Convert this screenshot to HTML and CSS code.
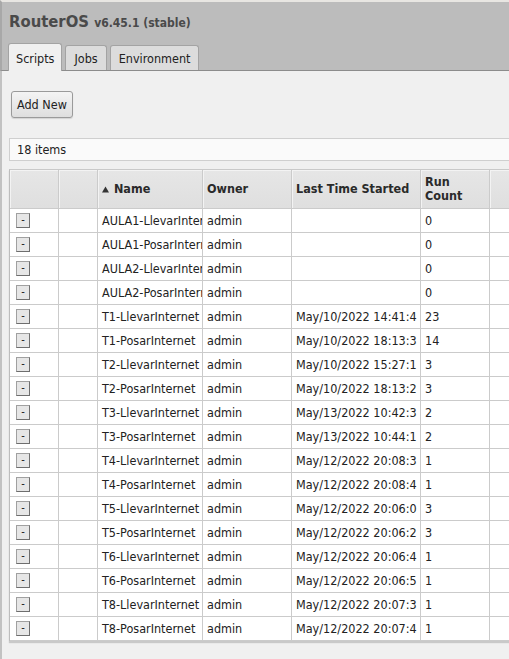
FILE: index.html
```html
<!DOCTYPE html>
<html lang="en">
<head>
<meta charset="utf-8">
<title>RouterOS - Scripts</title>
<link rel="stylesheet" href="styles.css">
</head>
<body>
<div class="page">
  <header class="topbar">
    <h1 class="title">RouterOS <span class="ver">v6.45.1 (stable)</span></h1>
    <nav class="tabs">
      <span class="tab active">Scripts</span>
      <span class="tab">Jobs</span>
      <span class="tab">Environment</span>
    </nav>
  </header>
  <main class="content">
    <div class="toolbar"><button class="btn" type="button">Add New</button></div>
    <div class="count">18 items</div>
    <table class="grid">
      <colgroup>
        <col class="c1"><col class="c2"><col class="c3"><col class="c4"><col class="c5"><col class="c6"><col class="c7">
      </colgroup>
      <thead>
        <tr>
          <th></th>
          <th></th>
          <th><svg class="sort" width="7" height="7" viewBox="0 0 7 7"><path d="M3.5 0.5 L7 6.5 L0 6.5 Z" fill="#333"/></svg> Name</th>
          <th>Owner</th>
          <th>Last Time Started</th>
          <th class="wrap">Run Count</th>
          <th></th>
        </tr>
      </thead>
      <tbody>
        <tr><td><span class="rm">-</span></td><td></td><td>AULA1-LlevarInternet</td><td>admin</td><td></td><td>0</td><td></td></tr>
        <tr><td><span class="rm">-</span></td><td></td><td>AULA1-PosarInternet</td><td>admin</td><td></td><td>0</td><td></td></tr>
        <tr><td><span class="rm">-</span></td><td></td><td>AULA2-LlevarInternet</td><td>admin</td><td></td><td>0</td><td></td></tr>
        <tr><td><span class="rm">-</span></td><td></td><td>AULA2-PosarInternet</td><td>admin</td><td></td><td>0</td><td></td></tr>
        <tr><td><span class="rm">-</span></td><td></td><td>T1-LlevarInternet</td><td>admin</td><td>May/10/2022 14:41:4</td><td>23</td><td></td></tr>
        <tr><td><span class="rm">-</span></td><td></td><td>T1-PosarInternet</td><td>admin</td><td>May/10/2022 18:13:3</td><td>14</td><td></td></tr>
        <tr><td><span class="rm">-</span></td><td></td><td>T2-LlevarInternet</td><td>admin</td><td>May/10/2022 15:27:1</td><td>3</td><td></td></tr>
        <tr><td><span class="rm">-</span></td><td></td><td>T2-PosarInternet</td><td>admin</td><td>May/10/2022 18:13:2</td><td>3</td><td></td></tr>
        <tr><td><span class="rm">-</span></td><td></td><td>T3-LlevarInternet</td><td>admin</td><td>May/13/2022 10:42:3</td><td>2</td><td></td></tr>
        <tr><td><span class="rm">-</span></td><td></td><td>T3-PosarInternet</td><td>admin</td><td>May/13/2022 10:44:1</td><td>2</td><td></td></tr>
        <tr><td><span class="rm">-</span></td><td></td><td>T4-LlevarInternet</td><td>admin</td><td>May/12/2022 20:08:3</td><td>1</td><td></td></tr>
        <tr><td><span class="rm">-</span></td><td></td><td>T4-PosarInternet</td><td>admin</td><td>May/12/2022 20:08:4</td><td>1</td><td></td></tr>
        <tr><td><span class="rm">-</span></td><td></td><td>T5-LlevarInternet</td><td>admin</td><td>May/12/2022 20:06:0</td><td>3</td><td></td></tr>
        <tr><td><span class="rm">-</span></td><td></td><td>T5-PosarInternet</td><td>admin</td><td>May/12/2022 20:06:2</td><td>3</td><td></td></tr>
        <tr><td><span class="rm">-</span></td><td></td><td>T6-LlevarInternet</td><td>admin</td><td>May/12/2022 20:06:4</td><td>1</td><td></td></tr>
        <tr><td><span class="rm">-</span></td><td></td><td>T6-PosarInternet</td><td>admin</td><td>May/12/2022 20:06:5</td><td>1</td><td></td></tr>
        <tr><td><span class="rm">-</span></td><td></td><td>T8-LlevarInternet</td><td>admin</td><td>May/12/2022 20:07:3</td><td>1</td><td></td></tr>
        <tr><td><span class="rm">-</span></td><td></td><td>T8-PosarInternet</td><td>admin</td><td>May/12/2022 20:07:4</td><td>1</td><td></td></tr>
      </tbody>
    </table>
  </main>
</div>
</body>
</html>
```
FILE: styles.css
```css
html, body {
  margin: 0;
  padding: 0;
  height: 100%;
}
body {
  background: #ededed;
  font-family: "DejaVu Sans Condensed", "DejaVu Sans", sans-serif;
  font-stretch: condensed;
  font-size: 12.5px;
  line-height: 14px;
  color: #222;
  overflow: hidden;
}
.page {
  min-height: 100%;
  border-left: 2px solid #c2c2c2;
  background: #f0f0f0;
}
.topbar {
  background: #bcbcbc;
  border-top: 2px solid #e8e6e2;
  border-bottom: 1px solid #8c8c8c;
  padding: 10px 0 0 0;
  margin-left: -2px;
  border-left: 2px solid #a8a8a8;
}
.title {
  margin: 0 0 0 7px;
  font-size: 16.5px;
  line-height: 20px;
  font-weight: bold;
  color: #4a4a4a;
}
.ver {
  font-size: 12px;
}
.tabs {
  display: flex;
  align-items: flex-end;
  gap: 3px;
  padding-left: 6px;
  margin-top: 10px;
  margin-bottom: -1px;
}
.tab {
  border: 1px solid #a3a3a3;
  border-bottom: none;
  border-radius: 3px 3px 0 0;
  background: #dcdcdc;
  padding: 6px 8px 4px 8px;
  margin-bottom: 1px;
  color: #222;
}
.tab.active {
  background: #f0f0f0;
  padding: 8px 7px 5px 7px;
  margin-bottom: 0;
}
.content {
  padding: 20px 0 0 7px;
}
.toolbar {
  padding-left: 2px;
}
.btn {
  font: inherit;
  color: #222;
  height: 27px;
  padding: 0 5px;
  border: 1px solid #9a9a9a;
  border-radius: 3px;
  background: linear-gradient(#f4f4f4, #dedede);
  box-shadow: 0 1px 1px rgba(0,0,0,0.12);
}
.count {
  margin-top: 20px;
  margin-right: -40px;
  border: 1px solid #cfcfcf;
  background: #fafafa;
  padding: 4px 0 0 7px;
  box-sizing: border-box;
  height: 23px;
}
.grid {
  margin-top: 8px;
  table-layout: fixed;
  width: 511px;
  border-collapse: separate;
  border-spacing: 0;
  border-top: 1px solid #c9c9c9;
  border-left: 1px solid #bdbdbd;
  background: #fff;
  box-shadow: 0 2px 1px rgba(0,0,0,0.16);
}
.c1 { width: 49px; }
.c2 { width: 39px; }
.c3 { width: 105px; }
.c4 { width: 89px; }
.c5 { width: 129px; }
.c6 { width: 69px; }
.c7 { width: 30px; }
.grid th, .grid td {
  border-right: 1px solid #cbcbcb;
  border-bottom: 1px solid #cbcbcb;
  padding: 0 4px;
  white-space: nowrap;
  overflow: hidden;
  text-align: left;
  vertical-align: middle;
}
.grid th {
  box-sizing: border-box;
  height: 39px;
  font-weight: bold;
  color: #2a2a2a;
  background: linear-gradient(#e6e6e6, #dfdfdf);
  box-shadow: inset 1px 1px 0 #f3f3f3;
}
.grid th.wrap {
  white-space: normal;
}
.grid td {
  height: 24px;
  box-sizing: border-box;
}
.grid td:first-child {
  padding-left: 6px;
}
.sort {
  vertical-align: 0;
  margin-right: 1px;
}
.rm {
  display: inline-block;
  width: 14px;
  height: 15px;
  box-sizing: border-box;
  border: 1px solid #a0a0a0;
  border-right-color: #6e6e6e;
  border-bottom-color: #6e6e6e;
  background: #e6e6e6;
  text-align: center;
  line-height: 12px;
  font-size: 11px;
  color: #111;
  vertical-align: middle;
}
```
